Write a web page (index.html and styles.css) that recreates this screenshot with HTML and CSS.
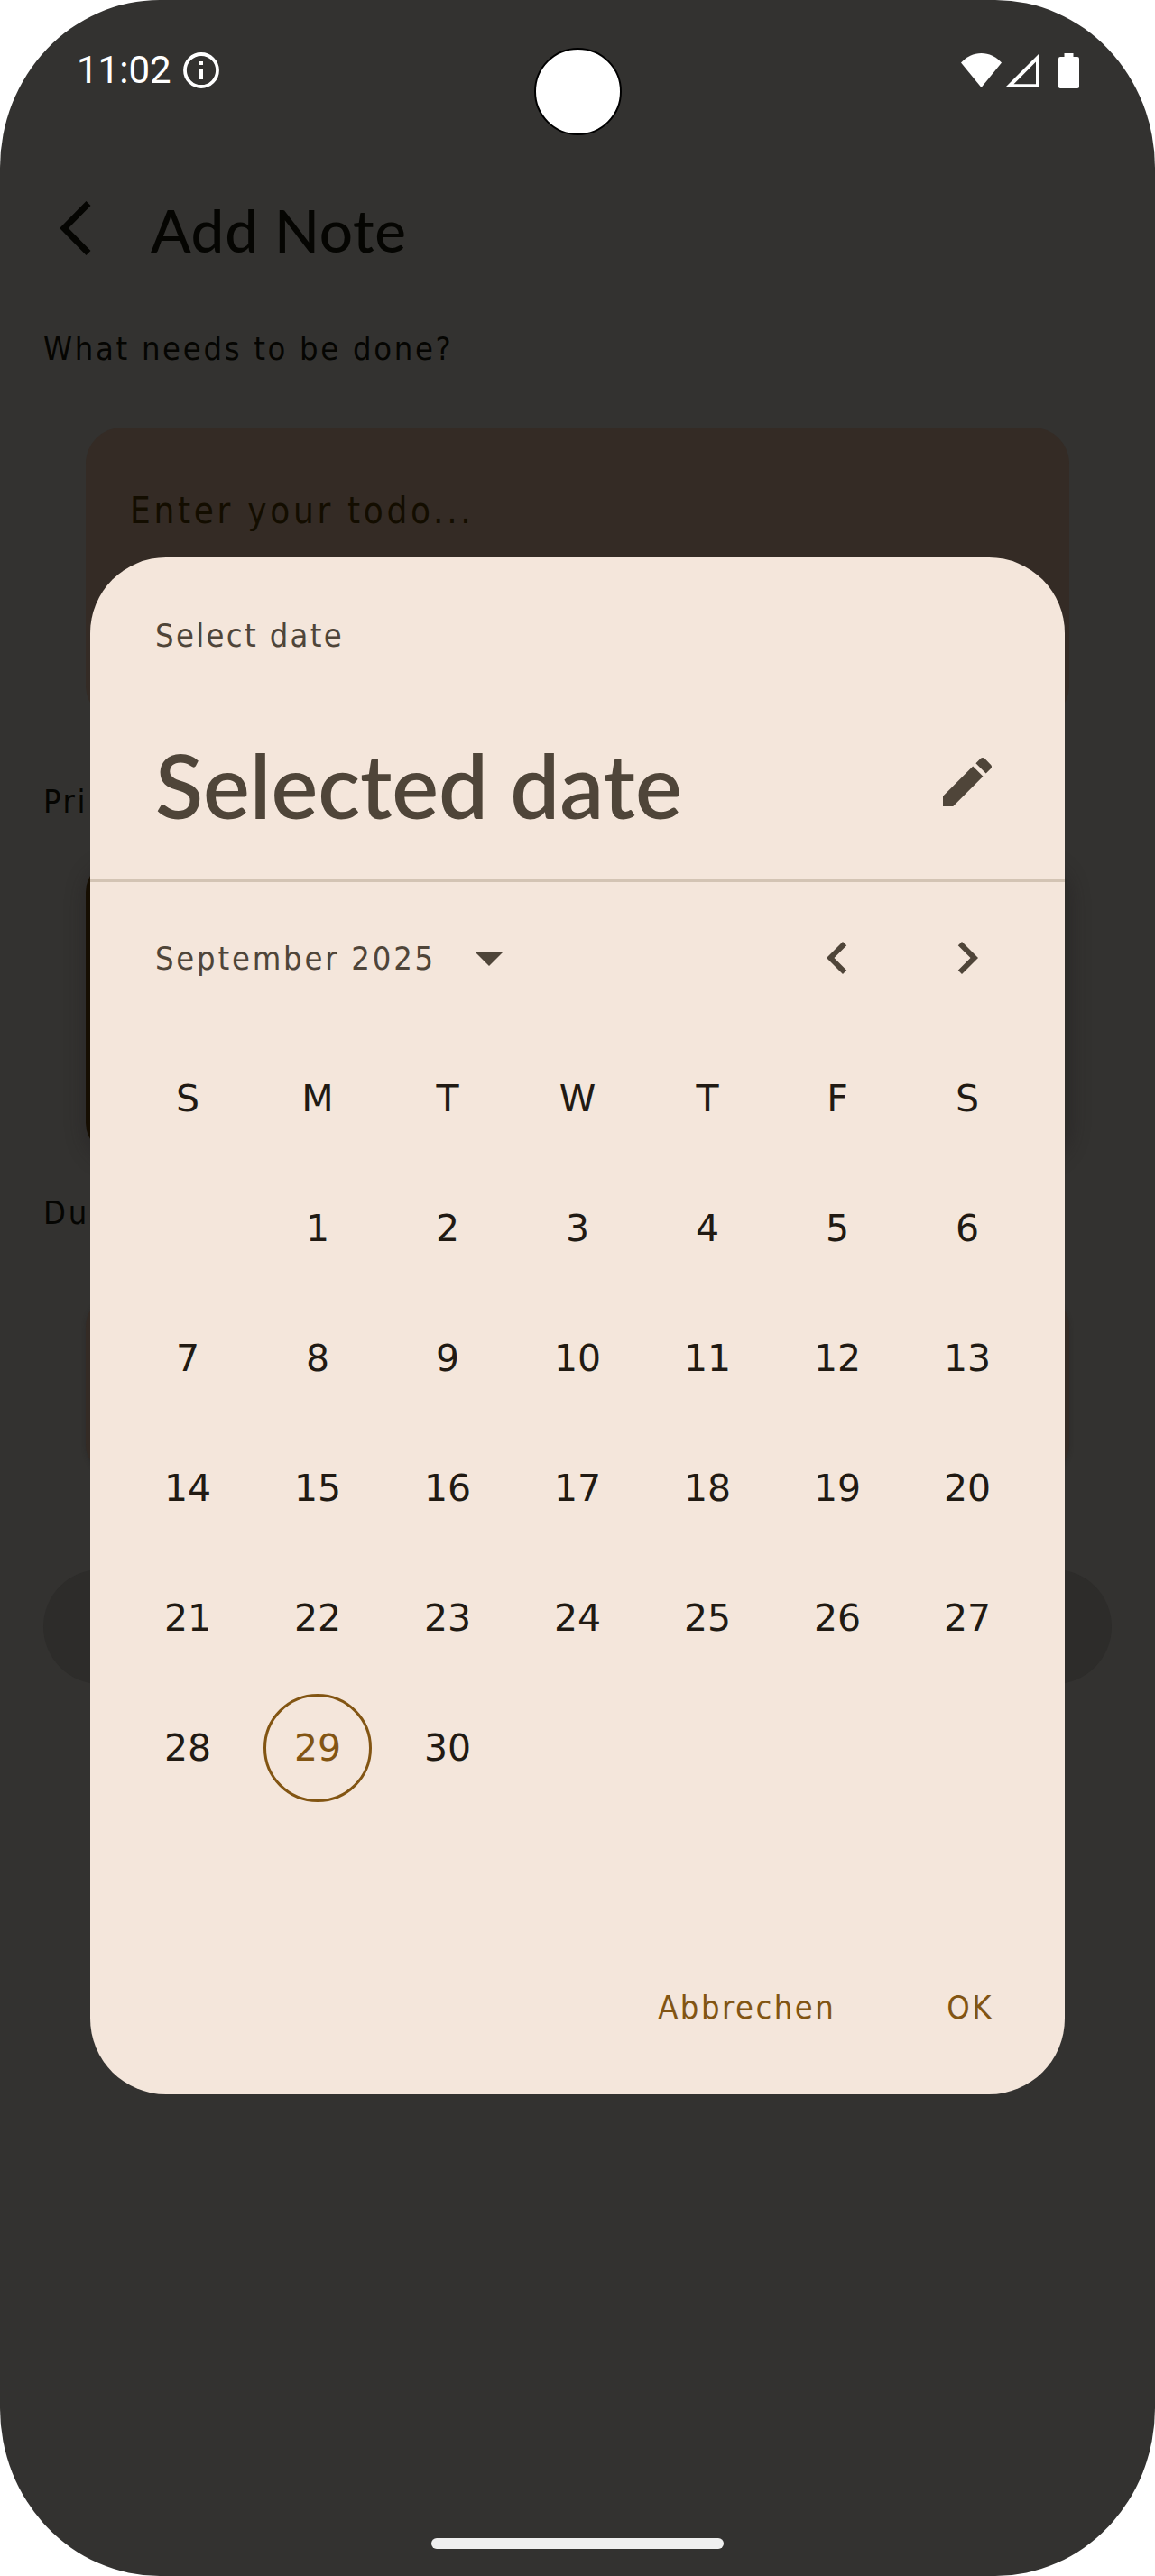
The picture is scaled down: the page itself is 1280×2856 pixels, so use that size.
FILE: index.html
```
<!DOCTYPE html>
<html lang="de">
<head>
<meta charset="utf-8">
<title>Add Note</title>
<link rel="stylesheet" href="styles.css">
</head>
<body>
<div class="screen">
  <header class="status-bar">
    <span class="clock">11:02</span>
    <svg class="info" viewBox="0 0 40 40"><circle cx="20" cy="20" r="18" fill="none" stroke="#fff" stroke-width="3.8"/><path d="M18 10h4v4h-4zM18 18h4v12h-4z" fill="#fff"/></svg>
    <div class="signals">
      <svg class="wifi" viewBox="0 0 45 38"><path d="M0 10.5C6 4 14 0 22.500 0S39 4 45 10.500L22.500 38z" fill="#fff"/></svg>
      <svg class="cell" viewBox="0 0 38 38"><path d="M38 0v38H0zM34 9.500L9.500 34.200H34z" fill="#fff" fill-rule="evenodd"/></svg>
      <svg class="battery" viewBox="0 0 23 39"><path d="M6.500 0h10v4H21a2 2 0 0 1 2 2v31a2 2 0 0 1-2 2H2a2 2 0 0 1-2-2V6a2 2 0 0 1 2-2h4.500z" fill="#fff"/></svg>
    </div>
  </header>
  <div class="camera"></div>

  <main class="page">
    <div class="app-bar">
      <svg class="back" viewBox="0 0 35 60"><path d="M32 2.500L5 30l27 27.500" fill="none" stroke="#050502" stroke-width="7"/></svg>
      <h1 class="title">Add Note</h1>
    </div>
    <div class="label label-todo">What needs to be done?</div>
    <div class="card card-todo"><span class="placeholder">Enter your todo...</span></div>
    <div class="label label-priority">Pri</div>
    <div class="card card-priority"></div>
    <div class="label label-due">Du</div>
    <div class="card card-due"></div>
    <div class="save"></div>
  </main>
  <div class="home-bar"></div>

  <section class="dialog">
    <div class="dialog-head">
      <div class="overline">Select date</div>
      <div class="headline-row">
        <h2 class="headline">Selected date</h2>
        <svg class="edit" viewBox="0 0 24 24"><path d="M3 17.250V21h3.750L17.810 9.940l-3.750-3.750L3 17.250zM20.710 7.040c.39-.39.39-1.020 0-1.410l-2.340-2.340c-.39-.39-1.020-.39-1.410 0l-1.830 1.830 3.750 3.750 1.830-1.830z" fill="#4f4539"/></svg>
      </div>
    </div>
    <div class="month-row">
      <span class="month">September 2025</span>
      <svg class="caret" viewBox="0 0 30 15"><path d="M0 0h30L15 15z" fill="#4f4539"/></svg>
      <div class="arrows">
        <svg class="arrow" viewBox="0 0 24 24"><path d="M15.410 7.410L14 6l-6 6 6 6 1.410-1.410L10.830 12z" fill="#4f4539"/></svg>
        <svg class="arrow" viewBox="0 0 24 24"><path d="M10 6L8.590 7.410 13.170 12l-4.580 4.590L10 18l6-6z" fill="#4f4539"/></svg>
      </div>
    </div>
    <div class="calendar">
      <span>S</span><span>M</span><span>T</span><span>W</span><span>T</span><span>F</span><span>S</span>
      <span></span><span>1</span><span>2</span><span>3</span><span>4</span><span>5</span><span>6</span>
      <span>7</span><span>8</span><span>9</span><span>10</span><span>11</span><span>12</span><span>13</span>
      <span>14</span><span>15</span><span>16</span><span>17</span><span>18</span><span>19</span><span>20</span>
      <span>21</span><span>22</span><span>23</span><span>24</span><span>25</span><span>26</span><span>27</span>
      <span>28</span><span class="today">29</span><span>30</span>
    </div>
    <div class="actions"><span>Abbrechen</span><span>OK</span></div>
  </section>
</div>
</body>
</html>
```
FILE: styles.css
```
* { box-sizing: border-box; }
body { margin: 0; background: #fff; }
svg { display: block; flex: none; }
h1, h2 { margin: 0; }

.screen {
  position: relative;
  width: 1280px;
  height: 2856px;
  overflow: hidden;
  background: #333230;
  border-radius: 177px / 186px;
  font-family: "DejaVu Sans Condensed", "DejaVu Sans", sans-serif;
  font-size: 36px;
  white-space: nowrap;
}

/* Status bar */
.status-bar {
  display: flex;
  align-items: center;
  height: 156px;
  padding: 0 84px 0 85px;
}
.clock {
  width: 118px;
  color: #fff;
  font: 42px/60px Roboto, sans-serif;
}
.info { width: 40px; height: 40px; }
.signals { display: flex; align-items: center; margin-left: auto; }
.wifi { width: 45px; height: 38px; }
.cell { width: 38px; height: 38px; margin-left: 4px; }
.battery { width: 23px; height: 39px; margin-left: 21px; }
.camera {
  position: absolute;
  left: 591.5px;
  top: 53px;
  width: 97px;
  height: 97px;
  border: 2px solid #000;
  border-radius: 50%;
  background: #fff;
}

/* Page behind the dialog */
.page { color: #050502; }
.app-bar {
  display: flex;
  align-items: center;
  height: 194px;
  padding-left: 66px;
}
.back { width: 35px; height: 60px; }
.title {
  margin-left: 66px;
  padding-top: 3px;
  font: 500 65.500px/100px Lato, sans-serif;
  letter-spacing: 0.700px;
}
.label {
  height: 75px;
  padding-left: 48px;
  line-height: 74px;
  letter-spacing: 2.700px;
}
.label-priority { margin-top: 52px; }
.label-due { margin-top: 27px; }
.card {
  margin: 0 95px;
  border-radius: 36px;
  background: #342b25;
}
.card-todo {
  height: 326px;
  margin-top: 49px;
  padding: 62px 49px;
  border-radius: 40px;
}
.placeholder {
  color: #130d00;
  font-size: 40px;
  line-height: 60px;
  letter-spacing: 3.700px;
}
.card-priority {
  height: 328px;
  margin-top: 26px;
  background: linear-gradient(90deg, #160e02 50%, #2d2c29 50%);
  box-shadow: 0 6px 22px rgba(30, 26, 28, 0.45);
}
.card-due { height: 202px; margin-top: 52px; box-shadow: 0 2px 5px rgba(30, 28, 26, 0.3); }
.save {
  height: 127px;
  margin: 103px 48px 0;
  border-radius: 64px;
  background: #2d2c2a;
}
.home-bar {
  position: absolute;
  left: 478px;
  top: 2814px;
  width: 324px;
  height: 12px;
  border-radius: 6px;
  background: #efefef;
}

/* Date picker */
.dialog {
  position: absolute;
  left: 100px;
  top: 618px;
  width: 1080px;
  height: 1704px;
  border-radius: 84px;
  background: #f4e6db;
  color: #4f4539;
}
.dialog-head {
  height: 360px;
  padding: 63px 72px 0 72px;
  border-bottom: 3px solid #d3c4b4;
}
.overline { line-height: 48px; letter-spacing: 2.350px; }
.headline-row {
  display: flex;
  align-items: center;
  justify-content: space-between;
  height: 120px;
  margin-top: 78px;
}
.headline {
  padding-top: 7px;
  font: 600 97.500px/120px Lato, sans-serif;
}
.edit { width: 72px; height: 72px; }
.month-row {
  display: flex;
  align-items: center;
  height: 168px;
  padding: 0 72px 0 72px;
}
.month { width: 355px; letter-spacing: 2.800px; }
.caret { width: 30px; height: 15px; margin-top: 3px; }
.arrows { display: flex; gap: 72px; margin-left: auto; }
.arrow { width: 72px; height: 72px; }
.calendar {
  display: grid;
  grid-template-columns: repeat(7, 144px);
  grid-auto-rows: 144px;
  height: 1008px;
  padding: 0 36px;
  color: #211a13;
  font-family: "DejaVu Sans", sans-serif;
  font-size: 41px;
}
.calendar span {
  display: flex;
  align-items: center;
  justify-content: center;
}
.calendar .today {
  margin: 12px;
  border: 3px solid #825513;
  border-radius: 50%;
  color: #825513;
}
.actions {
  display: flex;
  align-items: center;
  justify-content: flex-end;
  gap: 123px;
  height: 143px;
  padding-right: 79px;
  color: #825513;
  letter-spacing: 2.500px;
}
```
